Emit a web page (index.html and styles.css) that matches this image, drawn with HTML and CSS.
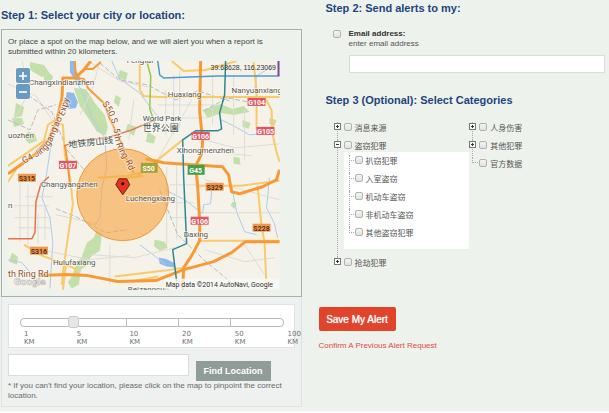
FILE: index.html
```html
<!DOCTYPE html>
<html lang="en">
<head>
    <meta charset="UTF-8">
    <meta name="viewport" content="width=device-width, initial-scale=1.0">
    <title>Get Alerts</title>
    <link rel="stylesheet" href="styles.css">
</head>
<body>
    <form class="alerts">
        <section class="location">
            <h2>Step 1: Select your city or location:</h2>

            <div class="map-box">
                <p>Or place a spot on the map below, and we will alert you when a report is submitted within 20 kilometers.</p>
                <div class="map">
                    <svg class="map-view" viewBox="8 61 272 229" role="img" aria-label="Map">
                        <rect class="land" x="8" y="61" width="272" height="229"/>

                        <!-- parks -->
                        <g class="park">
                            <path d="M74 88l12 1 9 14 10 12 3 12-2 9-9-4-8-13-9-13z"/>
                            <path d="M97 230l5 5-2 16-9 6-4 9-6 4-2 15-7 4-4-6 5-8 3-12 6-6 5-14 7-5z"/>
                            <path d="M16 103l8 4-2 9-8 2zM28 132l7 2 2 7-8 3-5-6zM30 62l14 3 7 10-9 2-12-7z"/>
                            <path d="M12 118h10l2 6-10 3zM44 70l9 6-2 9-7-5zM120 70l8 3-2 8-8-4z"/>
                            <path d="M148 132l8 5-2 7-8-2zM203 110l18-6 12 5 11-3 6 6-16 3-12-2-14 5zM234 157l6 1 1 7-7-1z"/>
                            <path d="M155 240l10 2 3 6-8 3-6-5zM243 120l8 3-2 6-6-2zM233 202l4 1-2 6-4-3zM270 118l7 2-2 6-5-2z"/>
                            <path d="M128 124l9 3-3 9-8-5zM12 253l6 4-1 8-8-3zM116 95l5 3-2 9-5-5z"/>
                        </g>

                        <!-- water -->
                        <g class="lake">
                            <path d="M67 92l7 1 4 9-2 6-7 1-4-8zM70 61h5l1 9 4 7 1 8-5-3-6-10z"/>
                            <path d="M159 258l7 1 8 4 2 5-9-1-7-3z"/>
                        </g>
                        <g class="river">
                            <path d="M76 80l8 15 8 23 13 20 2 30-5 20-2 30-6 8"/>
                            <path d="M52 140l-6 38-4 20 8 20 3 25-3 46"/>
                            <path d="M112 61l8 18 20 14 15 20 8 8M165 190l20 10 18 14 1-9 7-1 1-13 8-2"/>
                            <path d="M232 186l5 26 8 20 12 3M222 120l14 7 14 8 20-2M140 245l16 12 10 8"/>
                            <path d="M270 178l-3 30 8 16 3 14M8 260l14 3 10 12M255 90l2-14 13-8"/>
                        </g>

                        <!-- minor streets and railways -->
                        <g class="street">
                            <path d="M20 180v62M28 185v60M14 206h35M14 218h38M18 228h33M38 214v30M45 205v35M25 197h28"/>
                            <path d="M8 84l28 12 20 30M22 61l8 29-16 30M100 61l-8 30-12 24M88 61l32 20 28 6"/>
                            <path d="M174 75v60M180 70v58M158 105h60M157 118h50M166 90v45M213 75v50M234 75v60M245 110v50"/>
                            <path d="M167 167v80M177 165v75M170 185h30M172 203h22M170 218h18M205 180l75 20M203 213h77"/>
                            <path d="M56 215l45 10M90 255l45 3 40-10M110 245v40M205 250l40 12 30-4M245 245l20 30"/>
                            <path d="M205 140l30 8 45-4M212 152l40 4M192 100l-34 60M40 250l50 10 40-4M134 100l-5 40"/>
                        </g>
                        <g class="rail">
                            <path d="M100 63l20 17 28 5 28 15 22-9 32 10M28 95l24 17 15 38 20 23"/>
                            <path d="M56 209l20 8 30 16 22-3M160 190l18 45 26 25 30 25M204 111l24-13 20 4M8 120l22 10 8-20 18-5"/>
                        </g>

                        <!-- yellow roads -->
                        <g class="road">
                            <path d="M8 166l22-15 14-10 4-16 6-4 9 4 2 30 5 22 3 27-4 27-5 34-2 20"/>
                            <path d="M8 182l9-14M172 61l12 10 22-1 17-5 14-4M140 90l4 6 14 1h122M140 90V61"/>
                            <path d="M254 62l3 28v40M265 97l7 13 1 24 4 18 3 10M258 186l4 40 3 16 2 48"/>
                            <path d="M200 241h80M137 177l46-37M196 186h45l39-5M115 277l50-6 19-3"/>
                            <path d="M24 245l18 11 24 9 9 4 3 8M66 265l-3 25M123 179l20-3M98 178l30-2 25-6M132 282l26-5"/>
                        </g>

                        <!-- highways -->
                        <g class="highway">
                            <path d="M8 174l27-19 14-16 8-19 5-21 1-21 12 0 8-7 8-10"/>
                            <path class="thin" d="M65 145l3 20 2 20M75 61l1 17 8 1 4 9 16 15 6 16 12 25 4 14 8 15M84 69h9l8-7"/>
                            <path d="M201 61l-1 50 3 30-1 13-6 12 2 20 2 35v20l-8 15-8 12-1 22"/>
                            <path d="M146 159l18 4 28 2 31 2 6 8 3 17 8 2 23-7 14-7 3-10"/>
                            <path d="M40 276l26-1 22 1 30 6 38-1 28-11 30-8 18-9 14-11h34"/>
                        </g>
                        <path class="red-road" d="M64 146l14-5 29-3 25-8 23-10M49 177l-8 7-5 18-1 31-3 6-24 0"/>

                        <!-- subway lines -->
                        <path class="metro-blue" d="M158 61l2 14 4 3 54-2 62 0"/>
                        <path class="metro-teal" d="M226 61l-1 34-5 18 2 16-4 2-22 0-13 9 1 38 3 66-14 6 4 32"/>
                        <path class="metro-green" d="M147 61l4 15-1 33 5 14"/>
                        <path class="metro-purple" d="M279 61v15"/>

                        <circle class="radius" cx="123" cy="195" r="46"/>

                        <!-- road numbers -->
                        <g class="shield red">
                            <rect x="59" y="161" width="18" height="8"/><text x="68" y="168">G107</text>
                            <rect x="248" y="98" width="18" height="8"/><text x="257" y="105">G104</text>
                            <rect x="257" y="127" width="18" height="8"/><text x="266" y="134">G105</text>
                            <rect x="192" y="132" width="18" height="8"/><text x="201" y="139">G106</text>
                            <rect x="191" y="217" width="18" height="8"/><text x="200" y="224">G106</text>
                        </g>
                        <g class="shield orange">
                            <rect x="18" y="174" width="18" height="8"/><text x="27" y="181">S315</text>
                            <rect x="30" y="247" width="18" height="8"/><text x="39" y="254">S316</text>
                            <rect x="206" y="183" width="18" height="8"/><text x="215" y="190">S329</text>
                            <rect x="253" y="224" width="18" height="8"/><text x="262" y="231">S228</text>
                        </g>
                        <g class="shield green">
                            <rect x="188" y="165" width="17" height="10"/><text x="196" y="173">G45</text>
                            <rect class="olive" x="141" y="163" width="17" height="10"/><text x="149" y="171">S50</text>
                        </g>

                        <!-- place names -->
                        <g class="place">
                            <text x="29" y="85">Changxindianzhen</text>
                            <text x="8" y="138">uozhen</text>
                            <text x="41" y="187">Changyangzhen</text>
                            <text x="53" y="265">Hulufaxiang</text>
                            <text x="126" y="201">Luchengxiang</text>
                            <text x="168" y="97">Huaxiang</text>
                            <text x="232" y="93">Nanyuanxiang</text>
                            <text x="177" y="153">Xihongmenzhen</text>
                            <text x="184" y="237">Daxing</text>
                            <text x="128" y="292">Beizangcun</text>
                            <text x="127" y="63">Fengtai</text>
                            <text x="8" y="208">n</text>
                            <text class="poi" x="143" y="121">World Park</text>
                            <text class="poi poi-zh" x="143" y="131">世界公園</text>
                            <text class="poi poi-zh" transform="rotate(-6 69 148)" x="69" y="148">地铁房山线</text>
                        </g>
                        <path id="g4" class="guide" d="M24 164l17-9q9-7 14-20t10-21l5-18"/>
                        <path id="s50" class="guide" d="M102 104q10 12 12 28t8 24 12 28"/>
                        <g class="road-name">
                            <text><textPath href="#g4">G4 Jinggang'ao Expy</textPath></text>
                            <text><textPath href="#s50">S50 S. 5th Ring Rd</textPath></text>
                            <text x="8" y="277">th Ring Rd</text>
                        </g>
                        <text class="brand" x="14" y="285">Google</text>
                        <path class="pin" d="M123 195l-7-10 3-6h8l3 6z"/>
                        <circle cx="123" cy="184" r="1.5"/>
                        <rect class="credit-bg" x="165" y="279" width="115" height="11"/>
                        <text class="credit" x="166" y="287">Map data ©2014 AutoNavi, Google</text>
                        <text class="coords" x="211" y="70">39.68628, 116.23069</text>
                    </svg>
                    <div class="zoom">
                        <button type="button" aria-label="Zoom in"><svg viewBox="0 0 10 10"><path d="M0 5h10M5 0v10"/></svg></button>
                        <button type="button" aria-label="Zoom out"><svg viewBox="0 0 10 10"><path d="M0 5h10"/></svg></button>
                    </div>
                </div>
            </div>

            <div class="find-box">
                <div class="slider">
                    <div class="track">
                        <span></span><span></span><span></span><span></span><span></span>
                        <input type="range" min="0" max="5" value="1" aria-label="Alert radius">
                    </div>
                    <div class="scale">
                        <span>1<br>KM</span>
                        <span>5<br>KM</span>
                        <span>10<br>KM</span>
                        <span>20<br>KM</span>
                        <span>50<br>KM</span>
                        <span>100<br>KM</span>
                    </div>
                </div>
                <div class="find">
                    <input type="text" aria-label="Location">
                    <button type="button">Find Location</button>
                </div>
                <p class="note">* If you can't find your location, please click on the map to pinpoint the correct location.</p>
            </div>
        </section>

        <section class="options">
            <h2>Step 2: Send alerts to my:</h2>
            <div class="email">
                <input type="checkbox" id="email-on">
                <div class="email-text">
                    <label for="email-on">Email address:</label>
                    <label class="hint" for="email">enter email address</label>
                    <input type="text" id="email">
                </div>
            </div>

            <h2>Step 3 (Optional): Select Categories</h2>
            <div class="categories">
                <ul class="tree">
                    <li><button type="button" class="toggle" aria-label="Expand"></button><label><input type="checkbox"><span>消息来源</span></label></li>
                    <li><button type="button" class="toggle open" aria-label="Collapse"></button><label><input type="checkbox"><span>盗窃犯罪</span></label>
                        <ul class="subtree">
                            <li><label><input type="checkbox"><span>扒窃犯罪</span></label></li>
                            <li><label><input type="checkbox"><span>入室盗窃</span></label></li>
                            <li><label><input type="checkbox"><span>机动车盗窃</span></label></li>
                            <li><label><input type="checkbox"><span>非机动车盗窃</span></label></li>
                            <li><label><input type="checkbox"><span>其他盗窃犯罪</span></label></li>
                        </ul>
                    </li>
                    <li><button type="button" class="toggle" aria-label="Expand"></button><label><input type="checkbox"><span>抢劫犯罪</span></label></li>
                </ul>
                <ul class="tree">
                    <li><button type="button" class="toggle" aria-label="Expand"></button><label><input type="checkbox"><span>人身伤害</span></label></li>
                    <li><button type="button" class="toggle" aria-label="Expand"></button><label><input type="checkbox"><span>其他犯罪</span></label></li>
                    <li><i class="leaf"></i><label><input type="checkbox"><span>官方数据</span></label></li>
                </ul>
            </div>

            <div class="actions">
                <button type="submit" class="save">Save My Alert</button>
                <a href="#">Confirm A Previous Alert Request</a>
            </div>
        </section>
    </form>
</body>
</html>
```
FILE: styles.css
```css
* {
    margin: 0;
    padding: 0;
    box-sizing: border-box;
}

body {
    font-family: "Liberation Sans", Arial, "Noto Sans CJK SC", sans-serif;
    font-size: 8px;
    line-height: 10px;
    color: #444;
    background: #fcfdfc;
}

ul {
    list-style: none;
}

button,
input {
    font-family: inherit;
}

h2 {
    font-size: 11px;
    line-height: 14px;
    color: #1d4480;
}

input[type="text"] {
    display: block;
    border: 1px solid #d9dcda;
    background: #fff;
}

input[type="checkbox"] {
    appearance: none;
    flex: none;
    width: 8px;
    height: 8px;
    border: 1px solid #b0b3b0;
    border-radius: 2px;
    background: linear-gradient(#f4f5f4, #dfe2df);
}

.alerts {
    display: grid;
    grid-template-columns: 1fr 1fr;
    padding-bottom: 4px;
    background: #eef2ec;
}

/* Location */
.location {
    padding: 8px 3px 0 1px;
}

.map-box {
    margin-top: 7px;
    padding: 7px 21px 6px 6px;
    border: 1px solid #a9b0a9;
}

.map-box p {
    margin-bottom: 4px;
}

.map {
    position: relative;
}

.map-view {
    display: block;
    width: 100%;
    height: auto;
    font-family: Roboto, "Noto Sans CJK SC", sans-serif;
}

.land { fill: #f4f2e9; }
.park { fill: #c3dfaa; }
.lake { fill: #8fb9e8; }

.river,
.street,
.rail,
.road,
.highway,
.red-road,
.metro-blue,
.metro-teal,
.metro-green,
.metro-purple,
.guide {
    fill: none;
    stroke-linejoin: round;
}

.river { stroke: #aacdf0; }
.street { stroke: #dcdcd8; }
.rail { stroke: #bbb; stroke-dasharray: 5 2; }
.road { stroke: #f8ca6a; stroke-width: 2; }
.highway { stroke: #f79a36; stroke-width: 3; }
.highway .thin { stroke-width: 2; }
.red-road { stroke: #e8734a; stroke-width: 1.5; }
.metro-blue { stroke: #4c9bd0; stroke-width: 1.5; }
.metro-teal { stroke: #2d8793; stroke-width: 1.5; }
.metro-green { stroke: #93c850; stroke-width: 1.5; }
.metro-purple { stroke: #80439a; stroke-width: 2; }

.radius {
    fill: #f9a33e;
    fill-opacity: 0.6;
    stroke: #ee9a35;
}

.shield {
    font-size: 7px;
    font-weight: bold;
    text-anchor: middle;
    fill: #fff;
}

.shield.red rect { fill: #df5562; }
.shield.orange rect { fill: #ee984f; }
.shield.orange text { fill: #5a2f10; }
.shield.green rect { fill: #45a047; }
.shield.green .olive { fill: #a4a237; }

.place text,
.road-name text {
    font-size: 8px;
    fill: #5b5853;
    stroke: #fff;
    stroke-opacity: 0.5;
    stroke-width: 2;
    paint-order: stroke;
}

.place .poi { fill: #40524d; }
.place .poi-zh { font-size: 9px; }
.road-name text { font-size: 9px; fill: #93552d; }
.brand { font-size: 10px; font-weight: bold; fill: #fff; stroke: #aaa; stroke-width: 0.5; }
.pin { fill: #e83120; stroke: #6b2418; }
.credit-bg { fill: #f7f7f5; fill-opacity: 0.8; }
.credit { font-size: 7px; fill: #333; }
.coords { font: 7px "Liberation Sans", sans-serif; fill: #333; }

.zoom {
    position: absolute;
    top: 6px;
    left: 7px;
    display: grid;
    gap: 1px;
    padding: 1px;
    border-radius: 3px;
    background: rgba(255, 255, 255, 0.4);
}

.zoom button {
    display: grid;
    place-items: center;
    width: 14px;
    height: 15px;
    border: none;
    border-radius: 2px;
    background: #699bc1;
}

.zoom svg {
    width: 8px;
    height: 8px;
    stroke: #fff;
    stroke-width: 2;
}

.find-box {
    padding: 7px 6px 5px;
    border: 1px solid #dfe3e0;
    border-top: none;
    background: #eef1f0;
}

.slider {
    padding: 13px 10px 0 11px;
    height: 44px;
    border: 1px solid #dfe3e2;
    background: #fff;
}

.track {
    position: relative;
    display: grid;
    grid-template-columns: repeat(5, 1fr);
    height: 9px;
    border: 1px solid #b9bcbb;
    border-radius: 4px;
}

.track span + span {
    border-left: 1px solid #b9bcbb;
}

.track input {
    appearance: none;
    position: absolute;
    top: -3px;
    left: -6px;
    width: calc(100% + 12px);
    height: 13px;
    background: none;
}

.track input::-webkit-slider-thumb {
    appearance: none;
    width: 11px;
    height: 12px;
    border: 1px solid #cbcbcb;
    border-radius: 3px;
    background: #e6e6e6;
}

.scale {
    display: grid;
    grid-template-columns: repeat(5, 1fr) 0;
    margin-top: 3px;
    padding-left: 4px;
    margin-right: -4px;
    font: 7px/8px "DejaVu Sans", sans-serif;
    color: #707372;
}

.find {
    display: flex;
    gap: 7px;
    margin-top: 6px;
}

.find input {
    flex: 1;
    height: 22px;
}

.find button {
    margin: 7px 24px 0 0;
    width: 75px;
    height: 20px;
    border: none;
    font-size: 9px;
    font-weight: bold;
    color: #fff;
    background: #8f9c97;
}

.note {
    color: #666b69;
}

/* Options */
.options {
    padding: 1px 4px 0 21px;
}

.email {
    display: flex;
    gap: 8px;
    padding: 14px 0 0 7px;
    margin-bottom: 20px;
}

.email > input {
    margin-top: 1px;
}

.email-text {
    flex: 1;
}

.email-text label {
    display: block;
    font-weight: bold;
    color: #333;
}

.email-text .hint {
    font-weight: normal;
    color: #555;
}

.email-text input {
    width: 100%;
    height: 18px;
    margin-top: 6px;
}

.categories {
    display: grid;
    grid-template-columns: 1fr 1fr;
    padding-left: 8px;
    margin-top: 15px;
    color: #555;
}

.tree > li {
    position: relative;
    padding-bottom: 8px;
}

.tree > li::before {
    content: "";
    position: absolute;
    top: 0;
    bottom: 0;
    left: 3px;
    border-left: 1px dotted #aaa;
}

.tree > li:last-child::before {
    bottom: auto;
    height: 5px;
}

.tree label {
    display: inline-flex;
    align-items: center;
    gap: 3px;
    line-height: 10px;
    vertical-align: top;
}

.tree label span {
    padding-top: 2px;
    height: 10px;
}

.toggle,
.leaf {
    position: relative;
    display: inline-block;
    width: 7px;
    height: 7px;
    margin: 1px 3px 0 0;
    vertical-align: top;
}

.toggle {
    border: 1px solid #777;
    background:
        linear-gradient(#333, #333) center / 3px 1px no-repeat,
        linear-gradient(#333, #333) center / 1px 3px no-repeat,
        #fff;
}

.toggle.open {
    background: linear-gradient(#333, #333) center / 3px 1px no-repeat, #fff;
}

.leaf::before {
    content: "";
    position: absolute;
    top: 3px;
    left: 3px;
    width: 6px;
    border-top: 1px dotted #aaa;
}

.subtree {
    margin: 2px 0 0 10px;
    padding: 3px 0 4px 5px;
    background: #fff;
}

.subtree li {
    position: relative;
    padding: 0 0 8px 6px;
}

.subtree li::before {
    content: "";
    position: absolute;
    top: 0;
    left: 0;
    width: 6px;
    height: 5px;
    border: dotted #aaa;
    border-width: 0 0 1px 1px;
}

.subtree li:not(:last-child)::after {
    content: "";
    position: absolute;
    top: 0;
    bottom: 0;
    left: 0;
    border-left: 1px dotted #aaa;
}

.actions {
    display: flex;
    flex-direction: column;
    align-items: flex-start;
    gap: 10px;
    margin: 32px 0 0 -7px;
}

.save {
    width: 77px;
    height: 24px;
    border: none;
    border-radius: 2px;
    font-size: 10px;
    text-shadow: 0 0 1px #fff;
    color: #fff;
    background: #e2432b;
}

.actions a {
    color: #df4b45;
    text-decoration: none;
}
```
